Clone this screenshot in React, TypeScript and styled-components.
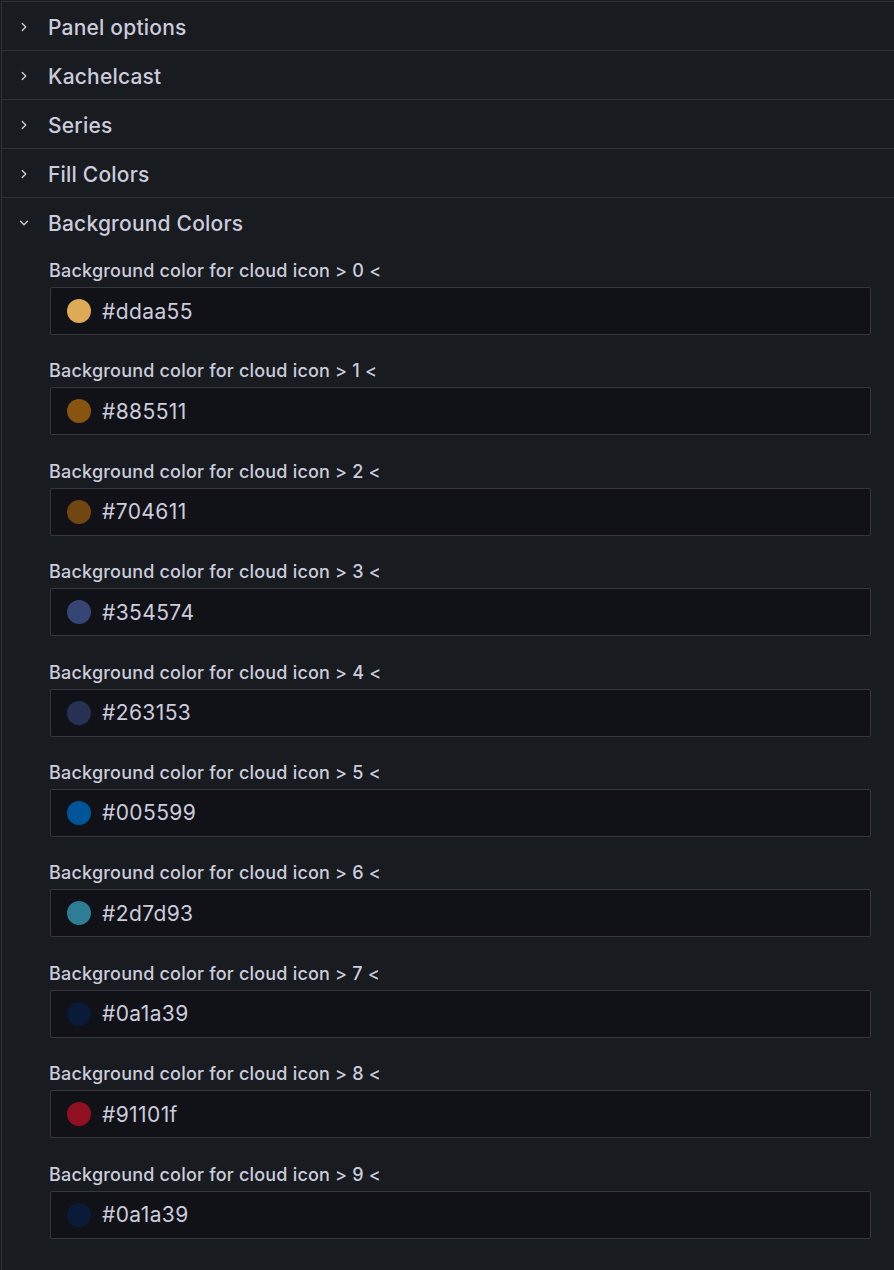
import React from 'react'
import styled, { createGlobalStyle } from 'styled-components'
import { ChevronRight, ChevronDown } from 'lucide-react'

const GlobalStyle = createGlobalStyle`
  html, body {
    margin: 0;
    padding: 0;
    background: #181b1f;
  }
  body {
    font-family: Inter, "Noto Sans", sans-serif;
    color: #ccccdc;
  }
`

const Pane = styled.div`
  margin: 1px 0 0 1px;
  border-left: 1px solid rgba(204, 204, 220, 0.12);
  border-top: 1px solid rgba(204, 204, 220, 0.12);
  min-height: 1269px;
  box-sizing: border-box;
`

const Section = styled.div`
  border-bottom: 1px solid rgba(204, 204, 220, 0.12);
  &:last-child {
    border-bottom: none;
  }
`

const SectionHeader = styled.div`
  display: flex;
  align-items: center;
  height: 48px;
  box-sizing: border-box;
  padding: 2px 0 0 15px;
  cursor: pointer;
`

const Chevron = styled.span`
  display: flex;
  width: 14px;
  justify-content: center;
  margin-right: 17px;
  color: #ccccdc;
`

const Title = styled.span`
  font-size: 21px;
  font-weight: 500;
  letter-spacing: 0.2px;
  color: #ccccdc;
`

const SectionBody = styled.div`
  padding: 15px 23px 6px 47px;
`

const Field = styled.div`
  margin-bottom: 26.4px;
`

const Label = styled.div`
  font-size: 18px;
  font-weight: 500;
  line-height: 20px;
  letter-spacing: 0.2px;
  color: #ccccdc;
  margin-bottom: 6px;
`

const ColorInput = styled.div`
  display: flex;
  align-items: center;
  height: 48px;
  box-sizing: border-box;
  margin-left: 1px;
  padding-left: 16px;
  background: #111217;
  border: 1px solid rgba(204, 204, 220, 0.2);
  border-radius: 2px;
`

const Swatch = styled.span<{ $color: string }>`
  width: 24px;
  height: 24px;
  border-radius: 50%;
  background: ${(p) => p.$color};
  margin-right: 11px;
  flex-shrink: 0;
`

const Value = styled.span`
  font-size: 21px;
  letter-spacing: 0.4px;
  color: #ccccdc;
`

const collapsed = ['Panel options', 'Kachelcast', 'Series', 'Fill Colors']

const colors = [
  '#ddaa55',
  '#885511',
  '#704611',
  '#354574',
  '#263153',
  '#005599',
  '#2d7d93',
  '#0a1a39',
  '#91101f',
  '#0a1a39',
]

const App = () => {
  return (
    <>
      <GlobalStyle />
      <Pane>
        {collapsed.map((name) => (
          <Section key={name}>
            <SectionHeader>
              <Chevron>
                <ChevronRight size={14} strokeWidth={2.4} />
              </Chevron>
              <Title>{name}</Title>
            </SectionHeader>
          </Section>
        ))}
        <Section>
          <SectionHeader>
            <Chevron>
              <ChevronDown size={14} strokeWidth={2.4} />
            </Chevron>
            <Title>Background Colors</Title>
          </SectionHeader>
          <SectionBody>
            {colors.map((c, i) => (
              <Field key={i}>
                <Label>{`Background color for cloud icon > ${i} <`}</Label>
                <ColorInput>
                  <Swatch $color={c} />
                  <Value>{c}</Value>
                </ColorInput>
              </Field>
            ))}
          </SectionBody>
        </Section>
      </Pane>
    </>
  )
}

export default App
